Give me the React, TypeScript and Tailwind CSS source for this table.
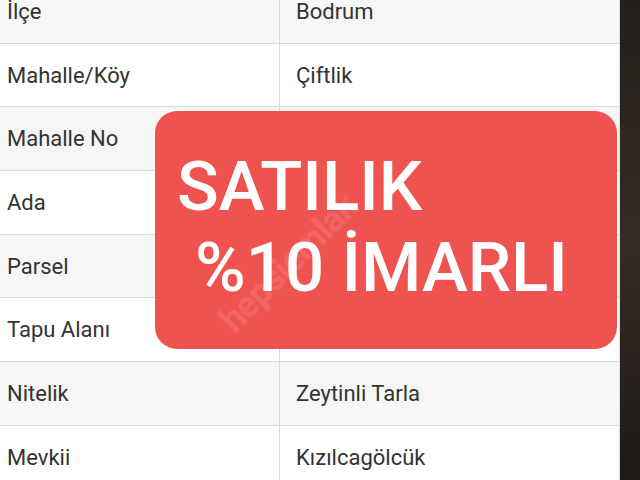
import React from 'react';

const rows: { label: string; value: string }[] = [
  { label: 'İlçe', value: 'Bodrum' },
  { label: 'Mahalle/Köy', value: 'Çiftlik' },
  { label: 'Mahalle No', value: '' },
  { label: 'Ada', value: '' },
  { label: 'Parsel', value: '' },
  { label: 'Tapu Alanı', value: '' },
  { label: 'Nitelik', value: 'Zeytinli Tarla' },
  { label: 'Mevkii', value: 'Kızılcagölcük' },
];

export default function App() {
  return (
    <div className="relative w-[640px] h-[480px] overflow-hidden bg-white font-['Roboto',sans-serif] text-[#333]">
      <div className="flex h-full">
        {/* Tablo */}
        <div className="w-[620px] border-r border-[#dcdcdc] -mt-[20px]">
          {rows.map((row, i) => (
            <div
              key={row.label}
              className={`flex h-[63.7px] border-b border-[#dadada] ${i % 2 === 0 ? 'bg-[#f6f6f6]' : 'bg-white'}`}
            >
              <div className="w-[280px] border-r border-[#dadada] pl-[7px] flex items-center text-[22px]">
                {row.label}
              </div>
              <div className="flex-1 pl-[16px] flex items-center text-[22px]">
                {row.value}
              </div>
            </div>
          ))}
        </div>
        {/* Sağ kenar (fotoğraf) */}
        <div className="flex-1 bg-gradient-to-b from-[#241f1b] via-[#342b25] to-[#1f1a17]" />
      </div>

      {/* Kırmızı etiket */}
      <div className="absolute left-[155px] top-[111px] w-[462px] h-[238px] rounded-[22px] bg-[#ee5350] text-white font-medium overflow-hidden">
        <div className="absolute left-[45px] top-[125px] -rotate-45 text-[36px] font-bold text-white/10 tracking-tight">
          hepsiemlak
        </div>
        <div className="relative pl-[22px] pt-[35px] text-[69px] leading-[81px]">
          <div>SATILIK</div>
          <div className="pl-[18px]">%10 İMARLI</div>
        </div>
      </div>
    </div>
  );
}
